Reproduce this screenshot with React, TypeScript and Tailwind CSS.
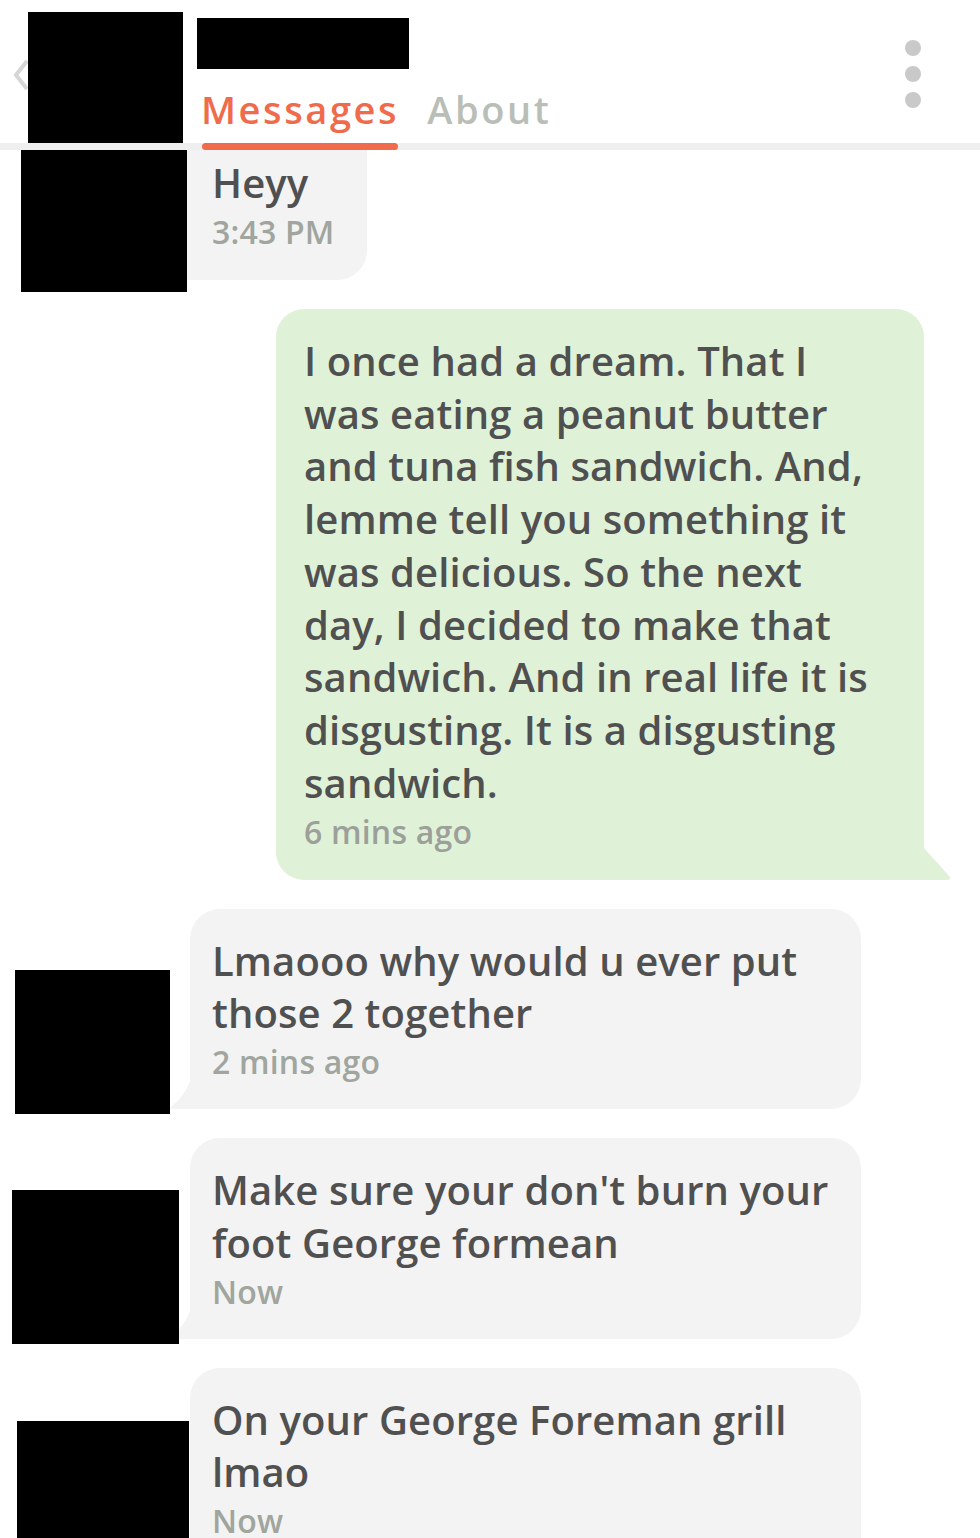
import React from "react";

const body = "text-[40px] font-semibold leading-[52.75px] text-[#505050] tracking-[0.1px] whitespace-nowrap";
const stamp = "text-[32px] font-semibold leading-[44px] text-[#a0a59e] tracking-[0.2px] whitespace-nowrap";

function ChatRow({
  avatar,
  lines,
  time,
}: {
  avatar: string;
  lines: string[];
  time: string;
}) {
  return (
    <div className="flex items-end">
      <div className={`relative z-10 shrink-0 bg-black ${avatar}`} />
      <div className="relative w-[671px] rounded-[30px] rounded-bl-none bg-[#f3f3f3] pl-[22px] pt-[26px] pb-[25px]">
        <svg className="absolute right-full bottom-0 h-[28px] w-[20px]" viewBox="0 0 20 28">
          <path d="M20 0 Q15 15 0 27 L0 28 L20 28 Z" fill="#f3f3f3" />
        </svg>
        {lines.map((l) => (
          <div key={l} className={body}>{l}</div>
        ))}
        <div className={stamp}>{time}</div>
      </div>
    </div>
  );
}

export default function App() {
  return (
    <div className="h-[1538px] w-[980px] overflow-hidden bg-white font-['Open_Sans',sans-serif]">
      {/* header */}
      <header className="relative z-20 bg-white">
        <div className="flex h-[143px] items-start pl-[13px]">
          <svg className="mt-[58px] h-[34px] w-[15px] shrink-0" viewBox="0 0 15 34">
            <path d="M14 3 L3 17 L14 31" fill="none" stroke="#d6d6d6" strokeWidth="4" />
          </svg>
          <div className="mt-[12px] h-[131px] w-[155px] shrink-0 bg-black" />
          <div className="ml-[14px] mt-[18px] flex flex-col">
            <div className="h-[51px] w-[212px] bg-black" />
            <div className="mt-[21px] flex gap-[28px] pl-[4px] text-[38px] font-semibold leading-[38px] tracking-[2.6px]">
              <span className="text-[#ef6b4b]">Messages</span>
              <span className="text-[#b9beb7]">About</span>
            </div>
          </div>
          <div className="ml-auto mr-[59px] mt-[40px] flex flex-col gap-[10px]">
            <span className="h-[16px] w-[16px] rounded-full bg-[#c9c9c9]" />
            <span className="h-[16px] w-[16px] rounded-full bg-[#c9c9c9]" />
            <span className="h-[16px] w-[16px] rounded-full bg-[#c9c9c9]" />
          </div>
        </div>
        <div className="h-[7px] bg-[#efefef]">
          <div className="ml-[202px] h-full w-[196px] rounded-full bg-[#ef6b4b]" />
        </div>
      </header>

      {/* conversation */}
      <section className="flex flex-col gap-[29px] overflow-hidden">
        <div className="-mt-[19px] flex items-end">
          <div className="relative z-10 ml-[21px] -mb-[12px] h-[146px] w-[166px] shrink-0 bg-black" />
          <div className="w-[180px] rounded-br-[30px] bg-[#f3f3f3] pl-[25px] pt-[26px] pb-[26px]">
            <div className={body}>Heyy</div>
            <div className={stamp}>3:43 PM</div>
          </div>
        </div>

        <div className="flex">
          <div className="relative ml-[276px] w-[648px] rounded-[28px] rounded-br-none bg-[#dff2d8] pl-[28px] pt-[26px] pb-[26px]">
            <svg className="absolute left-full bottom-0 h-[32px] w-[27px]" viewBox="0 0 27 32">
              <path d="M0 0 L26 29 Q27 32 23 32 L0 32 Z" fill="#dff2d8" />
            </svg>
            {[
              "I once had a dream. That I",
              "was eating a peanut butter",
              "and tuna fish sandwich. And,",
              "lemme tell you something it",
              "was delicious. So the next",
              "day, I decided to make that",
              "sandwich. And in real life it is",
              "disgusting. It is a disgusting",
              "sandwich.",
            ].map((l) => (
              <div key={l} className={body}>{l}</div>
            ))}
            <div className="text-[32px] font-semibold leading-[44px] tracking-[0.2px] text-[#9d9f9b]">6 mins ago</div>
          </div>
        </div>

        <ChatRow
          avatar="ml-[15px] mr-[20px] -mb-[5px] h-[144px] w-[155px]"
          lines={["Lmaooo why would u ever put", "those 2 together"]}
          time="2 mins ago"
        />
        <ChatRow
          avatar="ml-[12px] mr-[11px] -mb-[5px] h-[154px] w-[167px]"
          lines={["Make sure your don't burn your", "foot George formean"]}
          time="Now"
        />
        <ChatRow
          avatar="ml-[17px] mr-[1px] -mb-[5px] h-[152px] w-[172px]"
          lines={["On your George Foreman grill", "lmao"]}
          time="Now"
        />
      </section>
    </div>
  );
}
